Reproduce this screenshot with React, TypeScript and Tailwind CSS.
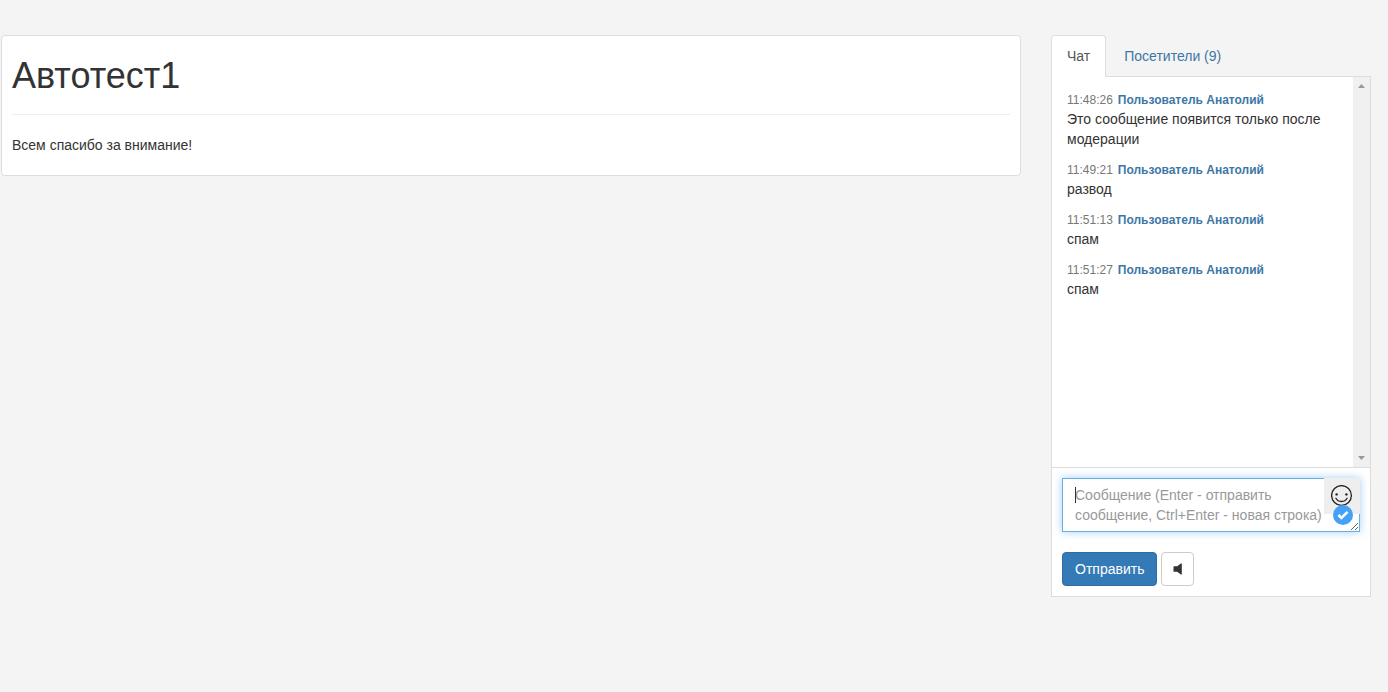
import { useState } from 'react';

type Message = { id: number; time: string; author: string; text: string };

const messages: Message[] = [
    { id: 1, time: '11:48:26', author: 'Пользователь Анатолий', text: 'Это сообщение появится только после модерации' },
    { id: 2, time: '11:49:21', author: 'Пользователь Анатолий', text: 'развод' },
    { id: 3, time: '11:51:13', author: 'Пользователь Анатолий', text: 'спам' },
    { id: 4, time: '11:51:27', author: 'Пользователь Анатолий', text: 'спам' },
];

const tabs = [
    { id: 'chat', label: 'Чат' },
    { id: 'visitors', label: 'Посетители (9)' },
];

const SmileIcon = () => (
    <svg viewBox="0 0 22 22" className="h-[22px] w-[22px]" fill="none" stroke="#222" strokeWidth="1.3" strokeLinecap="round">
        <circle cx="10.5" cy="10.5" r="9.9" />
        <circle cx="5.6" cy="9.4" r="1.2" fill="#222" stroke="none" />
        <circle cx="15.4" cy="9.4" r="1.2" fill="#222" stroke="none" />
        <path d="M4.900 13.300c1.100 2 3.100 3.200 5.600 3.200s4.500-1.200 5.600-3.200" />
    </svg>
);

const CheckBadge = () => (
    <svg viewBox="0 0 20 20" className="h-5 w-5">
        <circle cx="10" cy="10" r="10" fill="#45a1f5" />
        <path d="M5.400 10l3 3 6.200-6.200" fill="none" stroke="#fff" strokeWidth="2.6" />
    </svg>
);

const SpeakerIcon = () => (
    <svg viewBox="0 0 9 12" className="h-3 w-[9px]" fill="#333">
        <path d="M1 3.200h3.200L7.900.5c.4-.3.9-.1.9.4v10.200c0 .5-.5.7-.9.4L4.200 8.800H1a.5.5 0 0 1-.5-.5V3.700a.5.5 0 0 1 .5-.5z" />
    </svg>
);

// Classic scrollbar track with arrows only
const ScrollTrack = () => (
    <div aria-hidden="true" className="flex w-[17px] shrink-0 flex-col items-center justify-between bg-[#f0f0f0] py-[7px]">
        <svg viewBox="0 0 7 4" className="h-1 w-[7px]" fill="#999"><path d="M3.500 0L7 4H0z" /></svg>
        <svg viewBox="0 0 7 4" className="h-1 w-[7px]" fill="#999"><path d="M0 0h7L3.500 4z" /></svg>
    </div>
);

const Chat = () => {
    const [activeTab, setActiveTab] = useState('chat');
    const [draft, setDraft] = useState('');

    return (
        <aside className="w-80 shrink-0">
            <div role="tablist" className="flex gap-0.5 border-b border-[#ddd]">
                {tabs.map((tab) => (
                    <button
                        key={tab.id}
                        type="button"
                        role="tab"
                        aria-selected={activeTab === tab.id}
                        onClick={() => setActiveTab(tab.id)}
                        className={`-mb-px rounded-t border px-[15px] py-2.5 ${activeTab === tab.id ? 'border-[#ddd] border-b-white bg-white text-[#555]' : 'cursor-pointer border-transparent text-[#3d77a6]'}`}
                    >
                        {tab.label}
                    </button>
                ))}
            </div>

            <div className="border-x border-b border-[#ddd] bg-white">
                <div className="box-content flex h-[390px] border-b border-[#ddd]">
                    <ul className="flex flex-1 flex-col gap-2.5 overflow-y-auto px-[15px] py-3">
                        {messages.map((message) => (
                            <li key={message.id}>
                                <div className="h-5">
                                    <time className="mr-[5px] text-[12px] text-[#777]">{message.time}</time>
                                    <a href="#user" className="text-[12px] font-bold text-[#3d77a6]">{message.author}</a>
                                </div>
                                <p>{message.text}</p>
                            </li>
                        ))}
                    </ul>
                    <ScrollTrack />
                </div>

                <form className="flex flex-col gap-5 p-2.5" onSubmit={(e) => { e.preventDefault(); setDraft(''); }}>
                    <div className="relative flex">
                        <textarea
                            autoFocus
                            rows={2}
                            aria-label="Сообщение"
                            value={draft}
                            onChange={(e) => setDraft(e.target.value)}
                            placeholder="Сообщение (Enter - отправить сообщение, Ctrl+Enter - новая строка)"
                            className={`w-full resize-y overflow-hidden border border-[#66afe9] bg-white py-1.5 pr-[35px] pl-3 shadow-[0_0_8px_rgba(102,175,233,0.6)] outline-none placeholder:text-[#999] ${draft ? '' : 'caret-transparent'}`}
                        />
                        {/* Caret over the placeholder */}
                        {!draft && <span aria-hidden="true" className="pointer-events-none absolute top-[9px] left-[13px] h-4 w-px bg-[#333]" />}
                        <button type="button" aria-label="Смайлы" className="absolute top-0 right-0 flex h-9 w-9 cursor-pointer items-center justify-center bg-[#eee]">
                            <SmileIcon />
                        </button>
                        <span className="pointer-events-none absolute right-[7px] bottom-[7px]">
                            <CheckBadge />
                        </span>
                    </div>
                    <div className="flex gap-1">
                        <button type="submit" className="cursor-pointer rounded border border-[#2e6da4] bg-[#337ab7] px-3 py-1.5 text-white">
                            Отправить
                        </button>
                        <button type="button" aria-label="Звук" className="flex cursor-pointer items-center rounded border border-[#ccc] bg-white px-[11px]">
                            <SpeakerIcon />
                        </button>
                    </div>
                </form>
            </div>
        </aside>
    );
};

const App = () => {
    return (
        <div className="flex min-h-screen items-start gap-[30px] bg-[#f4f4f4] pt-[35px] pr-[17px] pl-px font-['Liberation_Sans',Arial,sans-serif] text-sm leading-5 text-[#333]">
            <main className="min-w-0 flex-1 rounded border border-[#ddd] bg-white p-2.5">
                <h1 className="mt-2.5 mb-5 border-b border-[#eee] pb-[18px] text-4xl leading-10">Автотест1</h1>
                <p className="mb-2.5">Всем спасибо за внимание!</p>
            </main>
            <Chat />
        </div>
    );
};

export default App;
